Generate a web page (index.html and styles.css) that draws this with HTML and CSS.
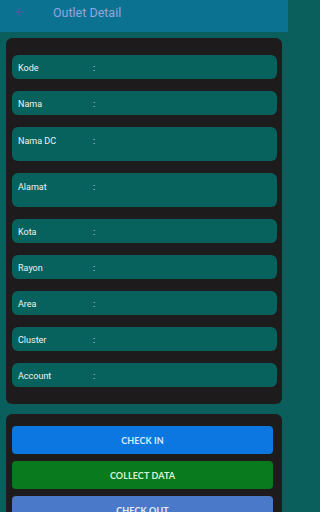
FILE: index.html
```html
<!DOCTYPE html>
<html>
<head>
<meta charset="utf-8">
<link rel="stylesheet" href="styles.css">
</head>
<body>
<div class="screen">
<header class="appbar">
  <svg class="back" width="12" height="12" viewBox="0 0 24 24"><path d="M20 11H7.8l5.6-5.6L12 4l-8 8 8 8 1.4-1.4L7.8 13H20z" fill="#6a4fa0"/></svg>
  <span class="title">Outlet Detail</span>
</header>
<main class="content">
  <section class="card info">
    <div class="row"><span class="label">Kode</span><span class="colon">:</span></div>
    <div class="row"><span class="label">Nama</span><span class="colon">:</span></div>
    <div class="row tall"><span class="label">Nama DC</span><span class="colon">:</span></div>
    <div class="row tall"><span class="label">Alamat</span><span class="colon">:</span></div>
    <div class="row"><span class="label">Kota</span><span class="colon">:</span></div>
    <div class="row"><span class="label">Rayon</span><span class="colon">:</span></div>
    <div class="row"><span class="label">Area</span><span class="colon">:</span></div>
    <div class="row"><span class="label">Cluster</span><span class="colon">:</span></div>
    <div class="row"><span class="label">Account</span><span class="colon">:</span></div>
  </section>
  <section class="card actions">
    <button class="btn btn-in">CHECK IN</button>
    <button class="btn btn-collect">COLLECT DATA</button>
    <button class="btn btn-out">CHECK OUT</button>
  </section>
</main>
</div>
</body>
</html>
```
FILE: styles.css
```css
html, body {
  margin: 0;
  padding: 0;
  height: 512px;
  overflow: hidden;
}
body {
  background: #0a5e5c;
  font-family: Roboto, "Noto Sans", sans-serif;
}
.screen {
  width: 288px;
  height: 512px;
  overflow: hidden;
}
.appbar {
  height: 32px;
  background: #0b7391;
  display: flex;
  align-items: center;
  box-sizing: border-box;
  padding-left: 14px;
  padding-bottom: 8px;
}
.back {
  flex: none;
  opacity: 0.8;
}
.title {
  margin-left: 27px;
  color: #93a5e2;
  font-size: 12.5px;
}
.content {
  padding: 6px 6px 0 6px;
  display: flex;
  flex-direction: column;
  gap: 10px;
}
.card {
  background: #1e1b1d;
  border-radius: 6px;
}
.info {
  padding: 17px 5px 17px 6px;
  display: flex;
  flex-direction: column;
  gap: 12px;
}
.row {
  height: 24px;
  box-sizing: border-box;
  background: #07625e;
  border-radius: 6px;
  display: flex;
  align-items: center;
  padding-left: 6px;
  padding-top: 2px;
  color: #eef2f1;
  font-size: 9px;
}
.row.tall {
  height: 34px;
  align-items: flex-start;
  padding-top: 9px;
}
.label {
  width: 75px;
}
.actions {
  padding: 12px 9px 12px 6px;
  display: flex;
  flex-direction: column;
  gap: 7px;
}
.btn {
  height: 28px;
  border: none;
  border-radius: 4px;
  font-family: Lato, "Open Sans", sans-serif;
  font-weight: bold;
  font-size: 9px;
  letter-spacing: 0.1px;
  padding: 0;
}
.btn-in {
  background: #0c77e0;
  color: #d8ecff;
}
.btn-collect {
  background: #0a7a1f;
  color: #d9f2d0;
}
.btn-out {
  background: #4b79c9;
  color: #e6eeff;
}
```
